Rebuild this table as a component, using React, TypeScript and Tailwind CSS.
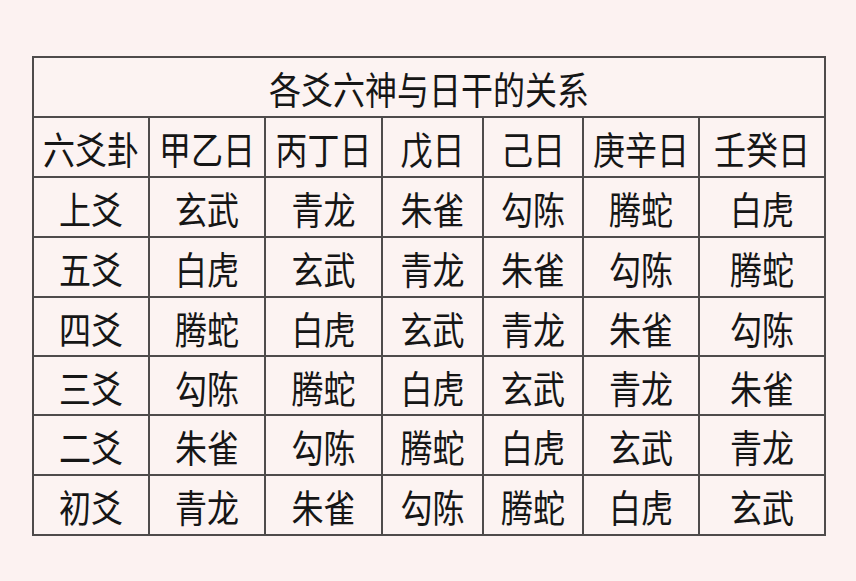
const title = "各爻六神与日干的关系";

const header = ["六爻卦", "甲乙日", "丙丁日", "戊日", "己日", "庚辛日", "壬癸日"];

const rows: string[][] = [
  ["上爻", "玄武", "青龙", "朱雀", "勾陈", "腾蛇", "白虎"],
  ["五爻", "白虎", "玄武", "青龙", "朱雀", "勾陈", "腾蛇"],
  ["四爻", "腾蛇", "白虎", "玄武", "青龙", "朱雀", "勾陈"],
  ["三爻", "勾陈", "腾蛇", "白虎", "玄武", "青龙", "朱雀"],
  ["二爻", "朱雀", "勾陈", "腾蛇", "白虎", "玄武", "青龙"],
  ["初爻", "青龙", "朱雀", "勾陈", "腾蛇", "白虎", "玄武"],
];

const rowHeights = ["h-[58px]", "h-[58px]", "h-[57px]", "h-[57px]", "h-[58px]", "h-[58px]"];

// the glyphs in the picture are a bit taller than wide
const Tall = ({ children }: { children: string }) => (
  <span className="inline-block scale-y-[1.18]">{children}</span>
);

const App = () => {
  return (
    <div
      className="w-[856px] h-[581px] bg-[#fcf2f1] pt-[56px] pl-[32px] text-[#161616]"
      style={{ fontFamily: '"Noto Sans CJK SC", "Noto Sans", sans-serif' }}
    >
      <div className="inline-grid grid-cols-[114px_114px_115px_99px_98px_114px_124px] gap-[2px] p-[2px] bg-[#4e4b4b]">
        <div className="col-span-7 h-[58px] bg-[#fcf3f2] flex items-center justify-center text-[32px] leading-none">
          <Tall>{title}</Tall>
        </div>
        {header.map((h) => (
          <div
            key={h}
            className="h-[58px] bg-[#fcf3f2] flex items-center justify-center text-[32px] leading-none"
          >
            <Tall>{h}</Tall>
          </div>
        ))}
        {rows.map((row, i) =>
          row.map((cell, j) => (
            <div
              key={`${i}-${j}`}
              className={`${rowHeights[i]} bg-[#fcf3f2] flex items-center justify-center text-[32px] leading-none`}
            >
              <Tall>{cell}</Tall>
            </div>
          ))
        )}
      </div>
    </div>
  );
};

export default App;
